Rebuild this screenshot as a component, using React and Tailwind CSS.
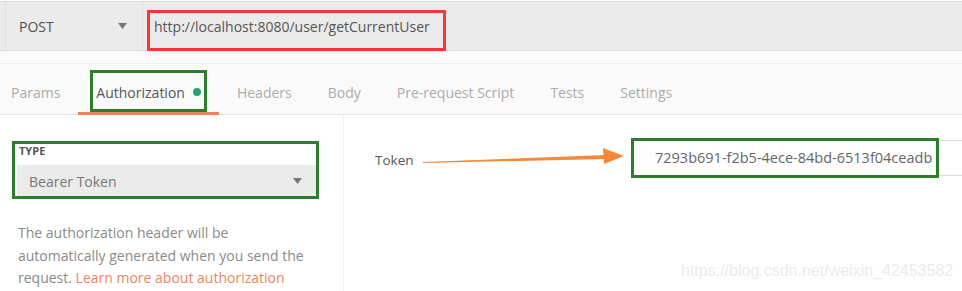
import React from "react";

const tabs = ["Params", "Authorization", "Headers", "Body", "Pre-request Script", "Tests", "Settings"];

export default function App() {
  return (
    <div className="relative w-[962px] h-[291px] overflow-hidden bg-white font-['Open_Sans',sans-serif]">
      {/* request bar */}
      <div className="mt-[1px] h-[50px] flex bg-[#ebebeb] border-y border-[#dcdcdc]">
        <div className="ml-[5px] w-[138px] flex items-center justify-between pl-[13px] pr-[15px] border-x border-[#e0e0e0] text-[14px] text-[#505050]">
          <span>POST</span>
          <svg width="9" height="6" viewBox="0 0 9 6"><path d="M0 0h9L4.5 6z" fill="#777" /></svg>
        </div>
        <div className="relative flex-1 flex items-center pl-[11px] text-[14px] text-[#555]">
          <span>http://localhost:8080/user/getCurrentUser</span>
          <div className="absolute left-[4px] top-[8px] w-[299px] h-[41px] border-[3px] border-[#ff3434]" />
        </div>
      </div>
      <div className="h-[13px] bg-[#fafafa] border-b border-[#ececec]" />
      {/* tabs */}
      <div className="h-[51px] flex items-stretch bg-[#fafafa] border-b border-[#e6e6e6] pl-[11px] text-[14px] text-[#ababab]">
        {tabs.map((t, i) => {
          const active = t === "Authorization";
          return (
            <div
              key={t}
              className={
                "relative flex items-center pt-[6px] " +
                (i === 0 ? "pr-[18px]" : "px-[18px]") +
                (active ? " text-[#555]" : "")
              }
            >
              <span>{t}</span>
              {active && (
                <>
                  <span className="ml-[8px] w-[8px] h-[8px] rounded-full bg-[#2aa07a]" />
                  <div className="absolute left-0 right-0 bottom-[-1px] h-[3px] bg-[#f08057]" />
                  <div className="absolute left-[12px] top-[6px] w-[117px] h-[42px] border-[3px] border-[#2c7e2c]" />
                </>
              )}
            </div>
          );
        })}
      </div>
      {/* content */}
      <div className="flex h-[176px]">
        <div className="w-[344px] border-r border-[#efefef] pl-[17px] pt-[29px]">
          <div className="relative w-[299px]">
            <div className="pl-[2px] text-[11px] font-bold text-[#555] leading-[14px] mb-[7px]">TYPE</div>
            <div className="h-[32px] bg-[#ebebeb] flex items-center justify-between pl-[12px] pr-[14px] text-[14px] text-[#777]">
              <span>Bearer Token</span>
              <svg width="9" height="6" viewBox="0 0 9 6"><path d="M0 0h9L4.5 6z" fill="#777" /></svg>
            </div>
            <div className="absolute left-[-5px] top-[-3px] w-[307px] h-[58px] border-[3px] border-[#2c7e2c]" />
          </div>
          <p className="mt-[25px] pl-[1px] text-[14px] leading-[22.5px] text-[#8a8a8a] w-[296px]">
            The authorization header will be automatically generated when you send the request.{" "}
            <span className="text-[#f0845f]">Learn more about authorization</span>
          </p>
        </div>
        <div className="flex-1 pl-[31px] pt-[25px]">
          <div className="flex items-center">
            <span className="w-[258px] pt-[5px] text-[13.5px] text-[#555]">Token</span>
            <div className="relative flex-1 h-[36px] border border-r-0 border-[#dcdcdc] flex items-center pl-[21px] text-[14.5px] text-[#666]">
              <span>7293b691-f2b5-4ece-84bd-6513f04ceadb</span>
              <div className="absolute left-[-3px] top-[-3px] w-[308px] h-[40px] border-[3px] border-[#2c7e2c]" />
            </div>
          </div>
        </div>
      </div>
      {/* arrow annotation */}
      <svg className="absolute left-0 top-0 pointer-events-none" width="962" height="291">
        <polygon points="423,162 606,155 606,159 423,163" fill="#f5893a" />
        <polygon points="603,148 624,156 604,164" fill="#f5893a" />
      </svg>
      {/* watermark */}
      <div className="absolute left-[681px] top-[261px] text-[16px] leading-[20px] text-[#ebebeb] font-['Liberation_Sans',sans-serif]">
        https://blog.csdn.net/weixin_42453582
      </div>
    </div>
  );
}
